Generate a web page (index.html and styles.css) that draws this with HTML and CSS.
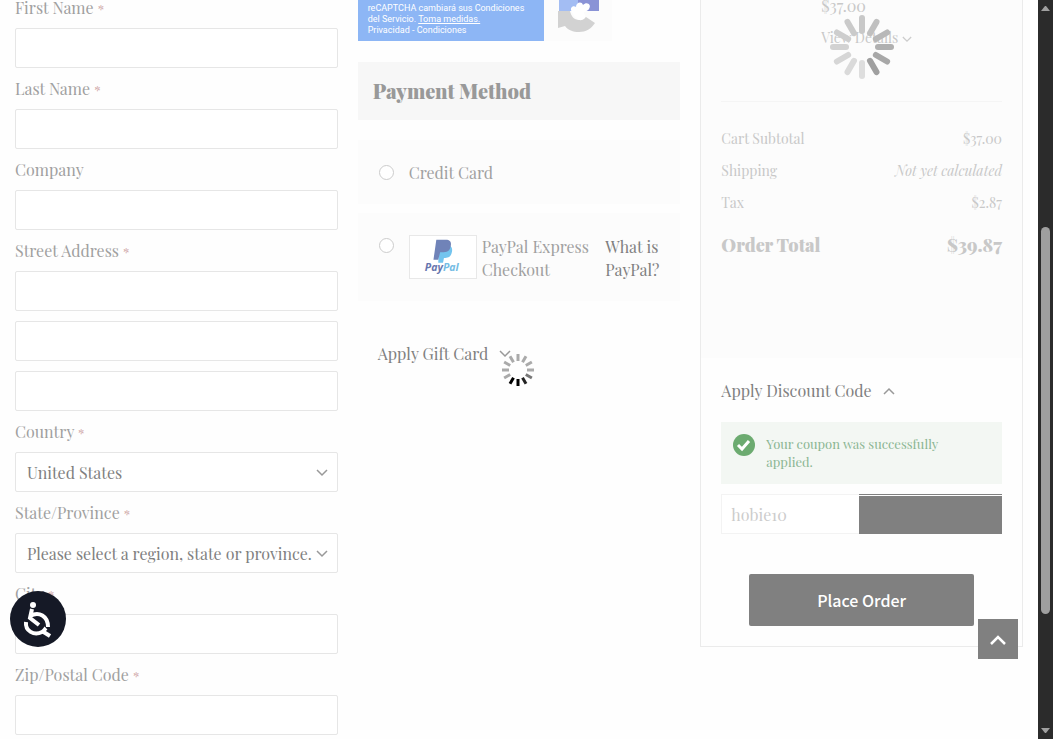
FILE: index.html
```html
<!DOCTYPE html>
<html lang="en">
<head>
    <meta charset="UTF-8">
    <meta name="viewport" content="width=device-width, initial-scale=1.0">
    <title>Checkout</title>
    <link rel="stylesheet" href="styles.css">
</head>
<body>
    <main class="checkout">
        <form class="shipping">
            <div class="field">
                <label for="firstname">First Name <span class="req">*</span></label>
                <input type="text" id="firstname">
            </div>
            <div class="field">
                <label for="lastname">Last Name <span class="req">*</span></label>
                <input type="text" id="lastname">
            </div>
            <div class="field">
                <label for="company">Company</label>
                <input type="text" id="company">
            </div>
            <div class="field">
                <label for="street1">Street Address <span class="req">*</span></label>
                <input type="text" id="street1">
                <input type="text" id="street2" aria-label="Street Address line 2">
                <input type="text" id="street3" aria-label="Street Address line 3">
            </div>
            <div class="field">
                <label for="country">Country <span class="req">*</span></label>
                <div class="select">
                    <select id="country"><option>United States</option></select>
                    <svg class="chevron" viewBox="0 0 12 8"><path d="M1 1l5 5 5-5"/></svg>
                </div>
            </div>
            <div class="field">
                <label for="region">State/Province <span class="req">*</span></label>
                <div class="select">
                    <select id="region"><option>Please select a region, state or province.</option></select>
                    <svg class="chevron" viewBox="0 0 12 8"><path d="M1 1l5 5 5-5"/></svg>
                </div>
            </div>
            <div class="field">
                <label for="city">City <span class="req">*</span></label>
                <input type="text" id="city">
            </div>
            <div class="field">
                <label for="zip">Zip/Postal Code <span class="req">*</span></label>
                <input type="text" id="zip">
            </div>
        </form>

        <section class="payment">
            <div class="recaptcha">
                <div class="recaptcha-text">
                    reCAPTCHA cambiará sus Condiciones<br>
                    del Servicio. <a href="#" class="underline">Toma medidas.</a><br>
                    <a href="#">Privacidad</a> - <a href="#">Condiciones</a>
                </div>
                <div class="recaptcha-logo">
                    <svg viewBox="0 0 68 41">
                        <path fill="#a3bdf3" d="M15 0h19v11H15z"/>
                        <path fill="#8a93d6" d="M34 0h21v11H34z"/>
                        <path fill="#d2d2d2" d="M14 11h12c1 5 4 9 9 9 3 0 5-1 7-3l9 6c-4 6-9 9-16 9-6 0-11-2-14-6l-7 2z"/>
                        <path fill="#fff" d="M28 12c-3-4 1-7 4-5 0-5 6-6 7-2 4-4 9 0 6 4-2 3-5 2-5 4s3 3 0 6c-4 3-9 0-12-7z"/>
                    </svg>
                </div>
            </div>
            <h2>Payment Method</h2>
            <div class="method">
                <input type="radio" name="method" id="card">
                <label for="card">Credit Card</label>
            </div>
            <div class="method paypal">
                <input type="radio" name="method" id="paypal">
                <label for="paypal">
                    <svg class="paypal-logo" viewBox="0 0 68 44" role="img" aria-label="PayPal">
                        <path fill="#73c4ee" d="M30 10h11c3 2 3 5 2 8-1 4-4 5-8 5l-1 5h-5z"/>
                        <path fill="#7083b8" d="M27 4h10c5 0 6 3 5 7-1 5-4 6-9 6h-2l-2 8h-5z"/>
                        <text x="15" y="37" fill="#6675ae">Pay<tspan fill="#74bce4">Pal</tspan></text>
                    </svg>
                    <span>PayPal Express Checkout</span>
                </label>
                <a href="#">What is PayPal?</a>
            </div>
            <button type="button" class="toggle gift">
                Apply Gift Card
                <svg class="chevron" viewBox="0 0 12 8"><path d="M1 1l5 5 5-5"/></svg>
                <svg class="gift-loader" viewBox="-16 -16 32 32">
                    <g stroke="#aaa" stroke-width="3">
                        <path d="M0-9v-7"/>
                        <path d="M0-9v-7" transform="rotate(30)"/>
                        <path d="M0-9v-7" transform="rotate(60)"/>
                        <path d="M0-9v-7" transform="rotate(90)"/>
                        <path d="M0-9v-7" stroke="#777" transform="rotate(120)"/>
                        <path d="M0-9v-7" stroke="#222" transform="rotate(150)"/>
                        <path d="M0-9v-7" stroke="#000" transform="rotate(180)"/>
                        <path d="M0-9v-7" stroke="#000" transform="rotate(210)"/>
                        <path d="M0-9v-7" transform="rotate(240)"/>
                        <path d="M0-9v-7" transform="rotate(270)"/>
                        <path d="M0-9v-7" transform="rotate(300)"/>
                        <path d="M0-9v-7" transform="rotate(330)"/>
                    </g>
                </svg>
            </button>
        </section>

        <aside class="summary">
            <div class="totals">
                <div class="item">
                    <span class="price">$37.00</span>
                    <a href="#">View Details
                        <svg class="chevron" viewBox="0 0 12 8"><path d="M1 1l5 5 5-5"/></svg>
                    </a>
                </div>
                <table>
                    <tr><th>Cart Subtotal</th><td>$37.00</td></tr>
                    <tr><th>Shipping</th><td><em>Not yet calculated</em></td></tr>
                    <tr><th>Tax</th><td>$2.87</td></tr>
                    <tr class="grand"><th>Order Total</th><td>$39.87</td></tr>
                </table>
                <svg class="loader" viewBox="-32 -32 64 64">
                    <g stroke-width="6" stroke-linecap="round">
                        <path d="M0-16v-13" stroke="#c8c8c8"/>
                        <path d="M0-16v-13" stroke="#c0c0c0" transform="rotate(30)"/>
                        <path d="M0-16v-13" stroke="#b8b8b8" transform="rotate(60)"/>
                        <path d="M0-16v-13" stroke="#b0b0b0" transform="rotate(90)"/>
                        <path d="M0-16v-13" stroke="#a8a8a8" transform="rotate(120)"/>
                        <path d="M0-16v-13" stroke="#a0a0a0" transform="rotate(150)"/>
                        <path d="M0-16v-13" stroke="#dedede" transform="rotate(180)"/>
                        <path d="M0-16v-13" stroke="#dadada" transform="rotate(210)"/>
                        <path d="M0-16v-13" stroke="#d6d6d6" transform="rotate(240)"/>
                        <path d="M0-16v-13" stroke="#d2d2d2" transform="rotate(270)"/>
                        <path d="M0-16v-13" stroke="#cecece" transform="rotate(300)"/>
                        <path d="M0-16v-13" stroke="#cacaca" transform="rotate(330)"/>
                    </g>
                </svg>
            </div>
            <form class="discount">
                <button type="button" class="toggle">
                    Apply Discount Code
                    <svg class="chevron" viewBox="0 0 12 8"><path d="M1 7l5-5 5 5"/></svg>
                </button>
                <div class="message">
                    <svg viewBox="0 0 22 22">
                        <circle cx="11" cy="11" r="11" fill="#6cab70"/>
                        <path d="M5 11l4 4 7-8" fill="none" stroke="#fff" stroke-width="3"/>
                    </svg>
                    <p>Your coupon was successfully applied.</p>
                </div>
                <div class="coupon">
                    <input type="text" value="hobie10" aria-label="Discount code">
                    <button type="button" aria-label="Cancel coupon"></button>
                </div>
                <button type="button" class="place-order">Place Order</button>
            </form>
        </aside>
    </main>

    <button type="button" class="accessibility" aria-label="Accessibility">
        <svg viewBox="0 0 56 56">
            <circle cx="23" cy="14" r="3" fill="#fff"/>
            <g fill="none" stroke="#fff" stroke-width="4">
                <path d="M22 18l-2 9 9 7"/>
                <path d="M20 25c9-5 18 0 18 11"/>
                <path d="M16 31c-1 9 8 14 16 10 2-1 3-3 4-4"/>
                <path d="M32 40l8 5"/>
            </g>
        </svg>
    </button>
    <button type="button" class="to-top" aria-label="Back to top">
        <svg viewBox="0 0 18 12"><path d="M2 10l7-7 7 7"/></svg>
    </button>
    <div class="scrollbar">
        <svg viewBox="0 0 9 5"><path d="M0 5l4-5h1l4 5z"/></svg>
        <div class="thumb"></div>
        <svg viewBox="0 0 9 5"><path d="M0 0h9l-4 5h-1z"/></svg>
    </div>
</body>
</html>
```
FILE: styles.css
```css
* {
    box-sizing: border-box;
}
body {
    margin: 0;
    padding-right: 15px;
    background-color: #fefefe;
    color: #808080;
    font-family: "Playfair Display", "Liberation Serif", serif;
    font-size: 16px;
    overflow: hidden;
}
button, input, select {
    font: inherit;
    color: inherit;
}
button {
    border: none;
    padding: 0;
    cursor: pointer;
}
a {
    color: inherit;
    text-decoration: none;
}
.checkout {
    display: grid;
    grid-template-columns: repeat(3, minmax(0, 1fr));
    gap: 20px;
    align-items: start;
    padding: 0 15px;
}
.chevron {
    width: 12px;
    height: 8px;
    fill: none;
    stroke: #999;
    stroke-width: 1.5;
}

/* shipping address */
.field {
    display: flex;
    flex-direction: column;
    gap: 10px;
    margin-bottom: 13px;
}
.field label {
    height: 16px;
    line-height: 16px;
    margin-bottom: 2px;
    color: #a0a0a0;
}
.req {
    color: #d0a8a8;
    font-size: 13px;
    line-height: 1px;
}
.field input, .select select {
    width: 100%;
    height: 40px;
    border: 1px solid #e6e6e6;
    border-radius: 2px;
    background-color: #fff;
    padding: 0 0 0 11px;
}
.select {
    position: relative;
}
.select select {
    display: block;
    appearance: none;
}
.select .chevron {
    position: absolute;
    right: 10px;
    top: 17px;
}

/* payment */
.recaptcha {
    display: flex;
    height: 41px;
    font-family: Roboto, sans-serif;
    font-size: 9px;
    line-height: 11px;
    color: #fff;
}
.recaptcha-text {
    width: 186px;
    padding: 3px 0 0 10px;
    background-color: #8db6f5;
    white-space: nowrap;
}
.underline {
    text-decoration: underline;
}
.recaptcha-logo {
    width: 68px;
    background-color: #fcfcfc;
}
.recaptcha-logo svg {
    display: block;
}
.payment h2 {
    margin: 21px 0 20px;
    padding: 0 15px;
    background-color: #f7f7f7;
    color: #999;
    font-size: 20px;
    font-weight: 900;
    line-height: 58px;
}
.method {
    display: flex;
    align-items: center;
    min-height: 64px;
    margin-bottom: 9px;
    padding: 20px;
    background-color: #fcfcfc;
    color: #a0a0a0;
    line-height: 23px;
}
.method input {
    appearance: none;
    flex: none;
    width: 15px;
    height: 15px;
    margin: 0 15px 0 1px;
    border: 1px solid #ccc;
    border-radius: 50%;
    background-color: #fff;
}
.paypal {
    align-items: flex-start;
    min-height: 87px;
    padding-top: 22px;
}
.paypal input {
    margin-top: 3px;
}
.paypal label {
    display: flex;
    flex: 1;
    gap: 5px;
}
.paypal a {
    width: 55px;
    color: #808080;
}
.paypal-logo {
    flex: none;
    width: 68px;
    height: 44px;
    border: 1px solid #e8e8e8;
    background-color: #fff;
    font: italic bold 11px "Open Sans", sans-serif;
}
.toggle {
    display: flex;
    align-items: center;
    gap: 11px;
    background: none;
    line-height: 24px;
}
.gift {
    position: relative;
    margin: 41px 0 0 20px;
}
.gift-loader {
    position: absolute;
    left: 100%;
    top: 12px;
    width: 32px;
    height: 32px;
    margin-left: -9px;
}

/* order summary */
.summary {
    border: 1px solid #ebebeb;
    border-top: none;
}
.totals {
    position: relative;
    min-height: 358px;
    padding: 0 20px;
    background-color: #fcfcfc;
    color: #c8c8c8;
    font-size: 14px;
}
.totals .chevron {
    width: 10px;
    height: 7px;
    stroke: #ccc;
}
.item {
    display: flex;
    flex-direction: column;
    gap: 20px;
    height: 102px;
    padding-left: 100px;
    border-bottom: 1px solid #f5f5f5;
    line-height: 12px;
}
.price {
    font-size: 16px;
}
.totals table {
    width: 100%;
    margin-top: 21px;
    border-collapse: collapse;
    line-height: 32px;
}
.totals th, .totals td {
    padding: 0;
    font-weight: normal;
    text-align: left;
}
.totals td {
    text-align: right;
}
.totals .grand th, .totals .grand td {
    padding-top: 10px;
    font-size: 18px;
    font-weight: 900;
}
.loader {
    position: absolute;
    top: 15px;
    left: 50%;
    width: 64px;
    height: 64px;
    margin-left: -32px;
}
.discount {
    padding: 21px 20px 20px;
}
.message {
    display: flex;
    gap: 11px;
    margin: 19px 0 10px;
    padding: 12px;
    background-color: #f3f7f3;
    color: #8ab592;
    font-size: 13px;
    line-height: 18px;
}
.message svg {
    flex: none;
    width: 22px;
    height: 22px;
}
.message p {
    width: 180px;
    margin: 1px 0;
}
.coupon {
    display: flex;
    height: 40px;
}
.coupon input {
    flex: 1;
    min-width: 0;
    padding: 0 9px;
    border: 1px solid #f3f3f3;
    border-right: none;
    background-color: #fff;
    color: #ccc;
}
.coupon button {
    width: 143px;
    border-top: 1px solid #808080;
    background-color: #808080;
    box-shadow: inset 0 1px #fff;
}
.place-order {
    display: block;
    width: 80%;
    height: 52px;
    margin: 40px auto 0;
    border-radius: 2px;
    background-color: #808080;
    color: #fff;
    font-family: "Noto Sans CJK SC", sans-serif;
    font-weight: 500;
}

/* floating controls */
.accessibility {
    position: fixed;
    left: 10px;
    bottom: 92px;
    width: 56px;
    height: 56px;
    border-radius: 50%;
    background-color: #151926;
}
.to-top {
    position: fixed;
    right: 35px;
    bottom: 80px;
    width: 40px;
    height: 40px;
    background-color: #808080;
}
.to-top svg {
    width: 18px;
    height: 12px;
    fill: none;
    stroke: #fff;
    stroke-width: 2.5;
}
.scrollbar {
    position: fixed;
    top: 0;
    right: 0;
    bottom: 0;
    display: flex;
    flex-direction: column;
    align-items: center;
    width: 15px;
    padding: 6px 0;
    background-color: #2b2b2b;
}
.scrollbar svg {
    width: 9px;
    height: 5px;
    fill: #a0a0a0;
}
.thumb {
    width: 9px;
    height: 387px;
    margin: 216px 0 auto;
    border-radius: 5px;
    background-color: #9f9f9f;
}
```
